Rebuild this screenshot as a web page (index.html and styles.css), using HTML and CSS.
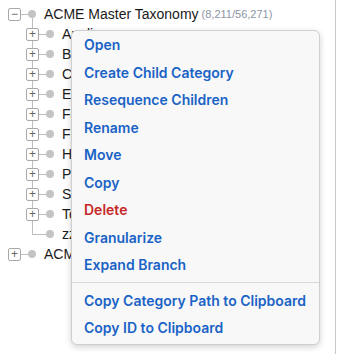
FILE: index.html
```html
<!DOCTYPE html>
<html lang="en">
<head>
    <meta charset="UTF-8">
    <meta name="viewport" content="width=device-width, initial-scale=1.0">
    <title>Taxonomy</title>

    <link rel="stylesheet" href="styles.css">
</head>
<body>
    <main class="page">
        <ul class="tree">
            <li>
                <div class="row">
                    <span class="toggle">&minus;</span>
                    <span class="link"></span>
                    <span class="dot"></span>
                    <span class="name">ACME Master Taxonomy</span>
                    <span class="count">(8,211/56,271)</span>
                </div>
                <ul class="children">
                    <li class="row"><span class="toggle">+</span><span class="link"></span><span class="dot"></span><span class="name">Appliances</span><span class="count">(850/3,418)</span></li>
                    <li class="row"><span class="toggle">+</span><span class="link"></span><span class="dot"></span><span class="name">Beauty</span><span class="count">(412/2,950)</span></li>
                    <li class="row"><span class="toggle">+</span><span class="link"></span><span class="dot"></span><span class="name">Computers</span><span class="count">(620/4,102)</span></li>
                    <li class="row"><span class="toggle">+</span><span class="link"></span><span class="dot"></span><span class="name">Electronics</span><span class="count">(1,204/9,880)</span></li>
                    <li class="row"><span class="toggle">+</span><span class="link"></span><span class="dot"></span><span class="name">Fashion</span><span class="count">(930/6,511)</span></li>
                    <li class="row"><span class="toggle">+</span><span class="link"></span><span class="dot"></span><span class="name">Fitness</span><span class="count">(304/1,877)</span></li>
                    <li class="row"><span class="toggle">+</span><span class="link"></span><span class="dot"></span><span class="name">Home</span><span class="count">(1,560/11,302)</span></li>
                    <li class="row"><span class="toggle">+</span><span class="link"></span><span class="dot"></span><span class="name">Pets</span><span class="count">(288/1,640)</span></li>
                    <li class="row"><span class="toggle">+</span><span class="link"></span><span class="dot"></span><span class="name">Sports</span><span class="count">(702/5,266)</span></li>
                    <li class="row"><span class="toggle">+</span><span class="link"></span><span class="dot"></span><span class="name">Toys</span><span class="count">(1,340/9,325)</span></li>
                    <li class="row"><span class="stub"></span><span class="link"></span><span class="dot"></span><span class="name">zz Unassigned</span><span class="count">(1/0)</span></li>
                </ul>
            </li>
            <li class="row">
                <span class="toggle">+</span>
                <span class="link"></span>
                <span class="dot"></span>
                <span class="name">ACME Sandbox Taxonomy</span>
                <span class="count">(14/82)</span>
            </li>
        </ul>

        <div class="menu">
            <a class="item">Open</a>
            <a class="item">Create Child Category</a>
            <a class="item">Resequence Children</a>
            <a class="item">Rename</a>
            <a class="item">Move</a>
            <a class="item">Copy</a>
            <a class="item danger">Delete</a>
            <a class="item">Granularize</a>
            <a class="item">Expand Branch</a>
            <div class="sep"></div>
            <a class="item">Copy Category Path to Clipboard</a>
            <a class="item">Copy ID to Clipboard</a>
        </div>
    </main>
</body>
</html>
```

FILE: styles.css
```css
body {
    margin: 0;
    background: #fff;
    font-family: "Liberation Sans", Arial, sans-serif;
    color: #1a1a1a;
}

.page {
    position: relative;
    width: 335px;
    height: 354px;
    border-right: 1px solid #c8c8c8;
    overflow: hidden;
}

.tree, .tree ul {
    list-style: none;
    margin: 0;
    padding: 0;
}

.tree {
    padding: 4px 0 0 8px;
}

.row {
    display: flex;
    align-items: center;
    height: 20px;
    white-space: nowrap;
}

.children {
    position: relative;
    padding-left: 18px !important;
}

.children::before {
    content: "";
    position: absolute;
    left: 24px;
    top: -6px;
    bottom: 10px;
    width: 1px;
    background: #bdbdbd;
}

.toggle {
    position: relative;
    box-sizing: border-box;
    width: 13px;
    height: 13px;
    border: 1px solid #a9a9a9;
    border-radius: 2px;
    background: #fff;
    color: #666;
    font-size: 12px;
    line-height: 10px;
    text-align: center;
    flex: none;
}

.stub {
    width: 13px;
    height: 20px;
    flex: none;
    background: linear-gradient(#bdbdbd, #bdbdbd) no-repeat 6px 10px / 7px 1px;
}

.link {
    width: 7px;
    height: 1px;
    background: #bdbdbd;
    flex: none;
}

.dot {
    width: 8px;
    height: 8px;
    border-radius: 50%;
    background: #c4c4c4;
    flex: none;
}

.name {
    margin-left: 8px;
    font-size: 14px;
}

.count {
    margin-left: 3px;
    font-size: 11px;
    color: #8c95a6;
}

.menu {
    position: absolute;
    left: 71px;
    top: 30px;
    width: 247px;
    padding: 0 0 2px;
    background: #f8f8f8;
    border: 1px solid #cfcfcf;
    border-radius: 6px;
    box-shadow: 0 2px 6px rgba(0, 0, 0, 0.18);
    font-family: "Inter", sans-serif;
}

.item {
    display: block;
    height: 27.5px;
    line-height: 27.5px;
    padding-left: 12px;
    font-size: 14px;
    font-weight: 600;
    color: #1a63c6;
}

.item.danger {
    color: #c62828;
}

.sep {
    height: 1px;
    margin: 3px 0 4px;
    background: #d9d9d9;
}
```
